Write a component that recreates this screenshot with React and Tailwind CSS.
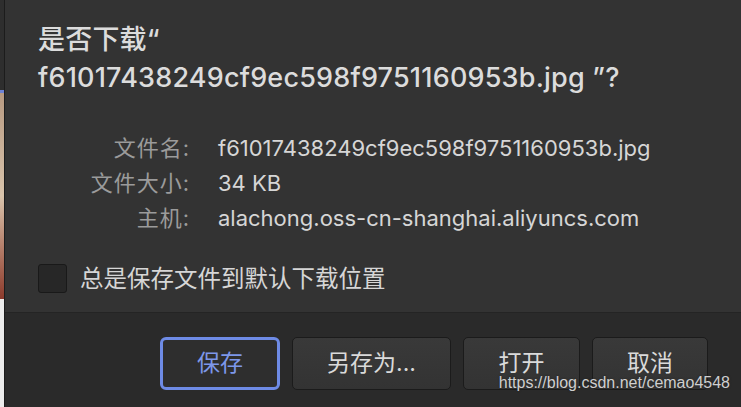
import React from 'react';

const fileName = 'f61017438249cf9ec598f9751160953b.jpg';

const details = [
  { label: '文件名:', value: fileName },
  { label: '文件大小:', value: '34 KB' },
  { label: '主机:', value: 'alachong.oss-cn-shanghai.aliyuncs.com' },
];

const buttons = [
  { text: '保存', width: 'w-[120px]', primary: true },
  { text: '另存为...', width: 'w-[159px]' },
  { text: '打开', width: 'w-[117px]' },
  { text: '取消', width: 'w-[116px]' },
];

const DownloadDialog = () => {
  return (
    <div
      className="flex w-[741px] h-[407px] overflow-hidden bg-[#2b2b2b]"
      style={{ fontFamily: 'Inter, "Noto Sans CJK SC", sans-serif' }}
    >
      {/* page behind the sheet */}
      <div className="flex flex-col w-[4px] shrink-0">
        <div className="h-[90px] bg-[#2e2e2e]" />
        <div className="h-[3px] bg-[#6d82d6]" />
        <div className="h-[206px] bg-gradient-to-b from-[#b79a82] via-[#d9c4ac] to-[#8b3a2c]" />
        <div className="flex-1 bg-[#ececec]" />
      </div>
      <div className="w-px shrink-0 bg-[#1c1c1c]" />

      <div className="relative flex flex-col flex-1">
        <div className="flex flex-col h-[312px] bg-[#333333] pl-[33px] pt-[21px]">
          <h1 className="text-[27px] leading-[38px] font-medium text-[#dcdcdc] tracking-[0.2px]">
            是否下载“
            <br />
            {fileName} ”?
          </h1>

          <div className="grid grid-cols-[185px_1fr] gap-x-[28px] mt-[34px] -ml-[33px] text-[22px] leading-[35px]">
            {details.map(row => (
              <React.Fragment key={row.label}>
                <span className="text-right text-[#9b9b9b] tracking-[1px]">{row.label}</span>
                <span className="text-[#d6d6d6]">{row.value}</span>
              </React.Fragment>
            ))}
          </div>

          <label className="flex items-center gap-[13px] mt-[25px]">
            <span className="w-[29px] h-[29px] rounded-[3px] bg-[#272727] border border-[#191919]" />
            <span className="text-[23.5px] text-[#d6d6d6]">总是保存文件到默认下载位置</span>
          </label>
        </div>

        <div className="h-px bg-[#242424]" />

        <div className="flex flex-1 justify-end items-start gap-[12px] pt-[24px] pr-[33px] bg-[#2a2a2a]">
          {buttons.map(btn => (
            <button
              key={btn.text}
              className={
                btn.primary
                  ? `${btn.width} h-[53px] rounded-[6px] border-[3px] border-[#6e8be6] bg-[#2e2e2e] text-[23px] text-[#7d97ea]`
                  : `${btn.width} h-[53px] rounded-[5px] border border-[#1b1b1b] bg-gradient-to-b from-[#393939] to-[#333333] text-[23px] text-[#dadada]`
              }
            >
              {btn.text}
            </button>
          ))}
        </div>

        <span
          className="absolute right-[11px] bottom-[12px] text-[16px] text-[#cfcfcf]"
          style={{ fontFamily: '"Liberation Sans", sans-serif', textShadow: '0 0 2px #222' }}
        >
          https://blog.csdn.net/cemao4548
        </span>
      </div>
    </div>
  );
};

export default function App() {
  return <DownloadDialog />;
}
